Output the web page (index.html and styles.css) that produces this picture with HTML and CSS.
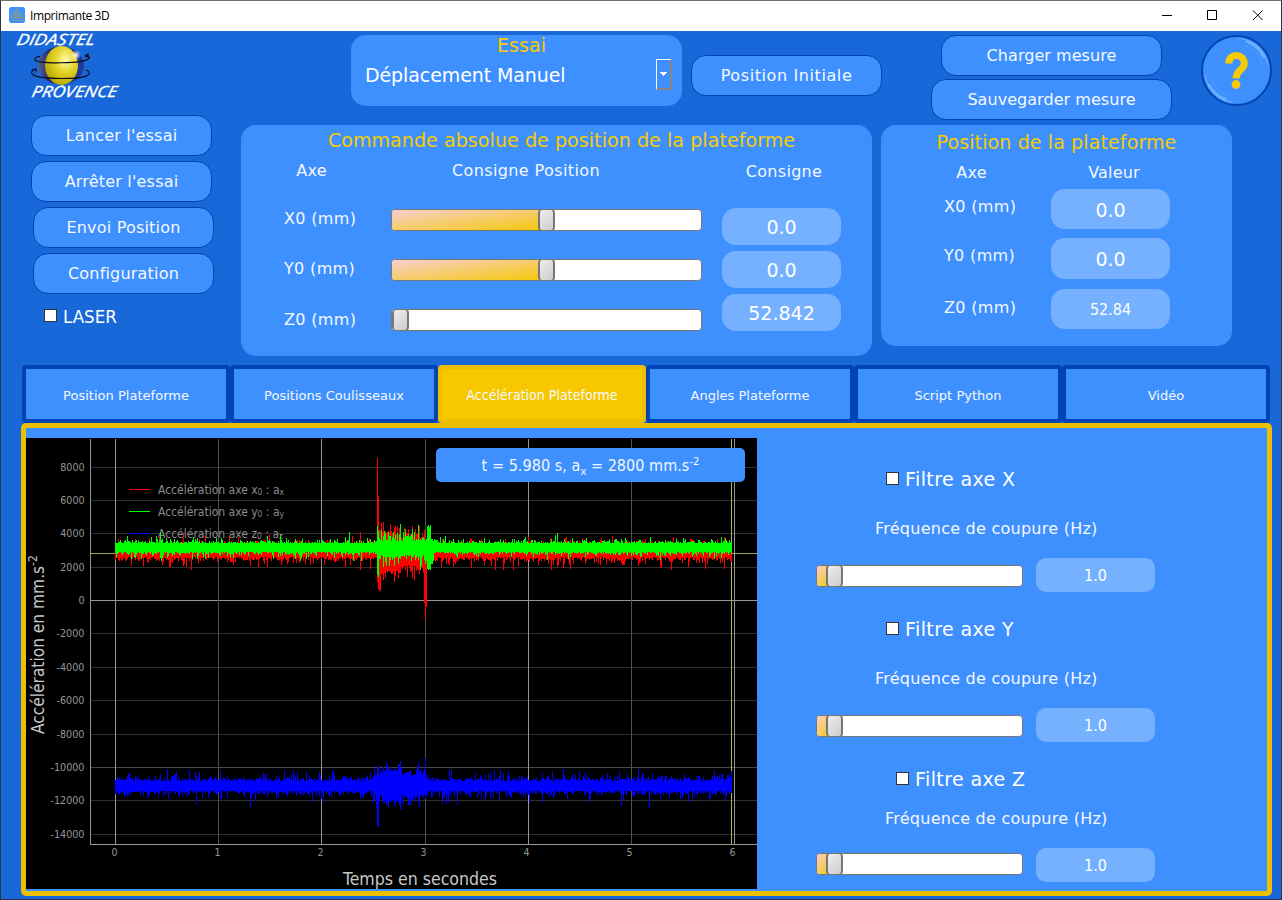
FILE: index.html
```html
<!DOCTYPE html>
<html lang="fr">
<head>
<meta charset="utf-8">
<title>Imprimante 3D</title>
<link rel="stylesheet" href="styles.css">
</head>
<body>
<div class="window">
  <header class="titlebar">
    <svg class="app-icon" width="16" height="16" viewBox="0 0 16 16"><rect width="16" height="16" rx="2.5" fill="#3f90ff"/><path d="M2.500 10.500h11l-1.500-3.500H4zM2.500 13h11M5.500 6.500L8 2.500l2.500 4M5.500 8.800h5" fill="none" stroke="#8f9f78" stroke-width="1.200"/></svg>
    <span class="app-title">Imprimante 3D</span>
    <svg class="win-controls" width="120" height="30" viewBox="0 0 120 30" fill="none" stroke="#000" stroke-width="1"><path d="M10 15.500h10M55.500 10.500h9v9h-9zM101 10.500l9.500 9.500M110.500 10.500l-9.500 9.500"/></svg>
  </header>

  <div class="top">
    <aside class="side">
      <svg class="logo" width="110" height="70" viewBox="14 31 110 70">
        <defs>
          <radialGradient id="ball" cx=".62" cy=".35" r=".7"><stop offset="0" stop-color="#fffbb0"/><stop offset=".45" stop-color="#e4d428"/><stop offset="1" stop-color="#b3a300"/></radialGradient>
          <linearGradient id="shell" x1="0" x2="1"><stop offset="0" stop-color="#54608c"/><stop offset=".3" stop-color="#1c1f70"/><stop offset="1" stop-color="#233a9c"/></linearGradient>
          <radialGradient id="shine"><stop offset="0" stop-color="#fff"/><stop offset="1" stop-color="#fff" stop-opacity="0"/></radialGradient>
        </defs>
        <ellipse cx="61" cy="65.500" rx="23" ry="19" fill="url(#shell)"/>
        <ellipse cx="61.500" cy="65.500" rx="16.500" ry="19.500" fill="url(#ball)"/>
        <circle cx="76" cy="55" r="5" fill="url(#shine)"/>
        <path d="M40 56.500c-4 0-6 2-5 3.500 4 4 48 4 54-1.500 1.500-1.500-1-2.500-4-2M85 56l3-2v4M34 70c-3 1-3 3-1 4.500 6 5.500 50 5 55 .5 2.500-2 1-4-2-5M32 70l4-1-.5 3.500" fill="none" stroke="#0b0b18" stroke-width="1.100"/>
        <text class="logo-text" transform="translate(16 45) skewX(-12)" textLength="78" lengthAdjust="spacingAndGlyphs">DIDASTEL</text>
        <text class="logo-text" transform="translate(31 97) skewX(-12)" textLength="85" lengthAdjust="spacingAndGlyphs">PROVENCE</text>
      </svg>
      <div class="side-buttons">
        <button class="btn">Lancer l'essai</button>
        <button class="btn">Arrêter l'essai</button>
        <button class="btn shifted">Envoi Position</button>
        <button class="btn shifted">Configuration</button>
      </div>
      <label class="check laser"><span class="box"></span>LASER</label>
    </aside>

    <div class="top-right">
      <div class="toolbar">
        <section class="card essai">
          <h2>Essai</h2>
          <div class="combo"><span>Déplacement Manuel</span><i class="combo-arrow"></i></div>
        </section>
        <button class="btn initial">Position Initiale</button>
        <div class="measure">
          <button class="btn load">Charger mesure</button>
          <button class="btn save">Sauvegarder mesure</button>
        </div>
        <svg class="help" width="71" height="71" viewBox="0 0 71 71">
          <circle cx="35.500" cy="35.500" r="34.500" fill="#3f90ff" stroke="#0043b3" stroke-width="2"/>
          <g fill="none" stroke="#78b6ff" stroke-linecap="round">
            <path d="M38 3.500a32 32 0 0 1 29 27M4 40a32 32 0 0 0 27 27" stroke-width="1.200" opacity=".7"/>
            <path d="M46 6.500a31 31 0 0 1 17 16M8 50a31 31 0 0 0 16 14" stroke-width="2.500" opacity=".8"/>
            <path d="M43 10a26 26 0 0 1 18 18M10 43a26 26 0 0 0 18 18" stroke-width="1" opacity=".3"/>
          </g>
          <path d="M27.800 28.500C28 17 43.500 18.500 43.300 28.500c-.1 7-8.300 6-8.300 15" fill="none" stroke="#f7cb00" stroke-width="7"/>
          <circle cx="35" cy="49.500" r="4.400" fill="#f7cb00"/>
        </svg>
      </div>

      <div class="cards">
        <section class="card command">
          <h2>Commande absolue de position de la plateforme</h2>
          <div class="command-cols">
            <div class="col axes"><h3>Axe</h3><span>X0 (mm)</span><span>Y0 (mm)</span><span>Z0 (mm)</span></div>
            <div class="col sliders"><h3>Consigne Position</h3>
              <div class="slider"><i class="fill half"></i><i class="knob"></i></div>
              <div class="slider"><i class="fill half"></i><i class="knob"></i></div>
              <div class="slider"><i class="fill zero"></i><i class="knob"></i></div>
            </div>
            <div class="col values"><h3>Consigne</h3><output>0.0</output><output>0.0</output><output>52.842</output></div>
          </div>
        </section>
        <section class="card position">
          <h2>Position de la plateforme</h2>
          <div class="position-cols">
            <div class="col axes"><h3>Axe</h3><span>X0 (mm)</span><span>Y0 (mm)</span><span>Z0 (mm)</span></div>
            <div class="col values"><h3>Valeur</h3><output>0.0</output><output class="tall">0.0</output><output class="narrow">52.84</output></div>
          </div>
        </section>
      </div>
    </div>
  </div>

  <nav class="tabs">
    <a class="tab">Position Plateforme</a>
    <a class="tab">Positions Coulisseaux</a>
    <a class="tab active">Accélération Plateforme</a>
    <a class="tab">Angles Plateforme</a>
    <a class="tab">Script Python</a>
    <a class="tab">Vidéo</a>
  </nav>

  <main class="pane">
    <div class="plot">
      <svg id="chart" width="731" height="451" viewBox="26 438 731 451">
        <g id="grid" fill="none"></g>
        <g class="legend">
          <path d="M129 489.500h21" stroke="#f00"/><path d="M129 511.500h21" stroke="#0f0"/><path d="M129 533.500h21" stroke="#00f"/>
          <text x="158" y="494" textLength="126" lengthAdjust="spacingAndGlyphs">Accélération axe x<tspan class="sub" dy="1">0</tspan><tspan dy="-1"> : a</tspan><tspan class="sub" dy="1">x</tspan></text>
          <text x="158" y="516" textLength="126" lengthAdjust="spacingAndGlyphs">Accélération axe y<tspan class="sub" dy="1">0</tspan><tspan dy="-1"> : a</tspan><tspan class="sub" dy="1">y</tspan></text>
          <text x="158" y="538" textLength="125" lengthAdjust="spacingAndGlyphs">Accélération axe z<tspan class="sub" dy="1">0</tspan><tspan dy="-1"> : a</tspan><tspan class="sub" dy="1">z</tspan></text>
        </g>
        <g id="traces"></g>
        <g id="ticks"></g>
        <text class="axis-title" x="343" y="885" textLength="154" lengthAdjust="spacingAndGlyphs">Temps en secondes</text>
        <text class="axis-title" transform="translate(44 734) rotate(-90)" textLength="179" lengthAdjust="spacingAndGlyphs">Accélération en mm.s<tspan class="sup" dy="-7">-2</tspan></text>
      </svg>
      <div class="readout"><span>t = 5.980 s, a<sub>x</sub> = 2800 mm.s<sup>-2</sup></span></div>
    </div>

    <div class="filters">
      <section class="filter">
        <label class="check"><span class="box"></span>Filtre axe X</label>
        <p>Fréquence de coupure (Hz)</p>
        <div class="filter-row"><div class="slider"><i class="fill small"></i><i class="knob"></i></div><output>1.0</output></div>
      </section>
      <section class="filter">
        <label class="check"><span class="box"></span>Filtre axe Y</label>
        <p>Fréquence de coupure (Hz)</p>
        <div class="filter-row"><div class="slider"><i class="fill small"></i><i class="knob"></i></div><output>1.0</output></div>
      </section>
      <section class="filter last">
        <label class="check"><span class="box"></span>Filtre axe Z</label>
        <p>Fréquence de coupure (Hz)</p>
        <div class="filter-row"><div class="slider"><i class="fill small"></i><i class="knob"></i></div><output>1.0</output></div>
      </section>
    </div>
  </main>
</div>
<script src="script.js"></script>
</body>
</html>
```
FILE: styles.css
```css
* { box-sizing: border-box; }
body { margin: 0; }
h2, h3, p { margin: 0; font-weight: 400; }
i { display: block; }

.window {
  width: 1282px; height: 900px; overflow: hidden;
  display: flex; flex-direction: column;
  background: #1868d9; color: #f4f8ff;
  border: 1px solid #2c3548; border-top-color: #6f6f6f;
  font: 16px/20px "DejaVu Sans", Verdana, sans-serif;
}
.titlebar {
  height: 30px; flex: none; display: flex; align-items: center;
  padding: 0 9px 2px 8px; background: #fff; color: #000;
}
.app-title { margin: 2px 0 0 5px; font: 12px/16px "Open Sans", "Noto Sans", sans-serif; letter-spacing: -.4px; }
.win-controls { margin-left: auto; }

.top { display: flex; height: 334px; flex: none; }
.side { width: 240px; flex: none; }
.logo { display: block; margin-left: 13px; overflow: visible; }
.logo-text { font: italic 500 15.5px "Open Sans", "Noto Sans", sans-serif; fill: #fff; stroke: #fff; stroke-width: .3px; }
.side-buttons { display: flex; flex-direction: column; gap: 5px; padding: 14px 0 0 30px; }
.btn {
  width: 181px; height: 41px; padding: 0; flex: none;
  border: 1px solid #0043b3; border-radius: 15px;
  background: #3f90ff; color: #f4f8ff; font: inherit; letter-spacing: .2px;
}
.shifted { margin-left: 2px; }
.check { display: flex; align-items: center; gap: 6px; font-size: 19px; color: #fff; }
.box { width: 13px; height: 13px; border: 1px solid #333; background: #fff; }
.laser { margin: 13px 0 0 43px; font: 18.5px/20px "DejaVu Sans Condensed", "Noto Sans", sans-serif; letter-spacing: 0; }
.laser .box { margin-top: -3px; }

.toolbar { display: flex; height: 94px; padding: 4px 0 0 110px; }
.card { background: #3f90ff; border-radius: 15px; flex: none; }
.card h2 { color: #f7cb00; font-size: 19px; line-height: 22px; text-align: center; letter-spacing: .08px; }
.essai { width: 331px; height: 71px; }
.essai h2 { padding: 0 0 0 10px; margin-top: -1px; }
.combo { display: flex; justify-content: space-between; padding: 3px 10px 0 14px; font-size: 19px; line-height: 32px; color: #fff; letter-spacing: -.1px; }
.combo-arrow {
  width: 16px; height: 31px; border: 1px solid #fff; border-right: 2px solid #858585; border-bottom: 2px solid #858585;
  background: linear-gradient(#fff, #fff) 3px 12px / 7px 1px no-repeat, linear-gradient(#fff, #fff) 4px 13px / 5px 1px no-repeat, linear-gradient(#fff, #fff) 5px 14px / 3px 1px no-repeat, linear-gradient(#fff, #fff) 6px 15px / 1px 1px no-repeat;
}
.initial { width: 191px; margin: 20px 0 0 9px; letter-spacing: .6px; }
.measure { display: flex; flex-direction: column; align-items: center; gap: 3px; margin-left: 49px; }
.measure .btn { letter-spacing: .05px; }
.measure .load { width: 221px; }
.measure .save { width: 241px; }
.help { margin-left: 29px; flex: none; }

.cards { display: flex; gap: 9px; }
.command { width: 631px; height: 231px; padding-top: 4px; }
.command h2 { padding-left: 10px; }
.col { display: flex; flex-direction: column; }
.col h3 { font-size: 16px; line-height: 20px; text-align: center; white-space: nowrap; letter-spacing: .2px; }
output {
  display: block; width: 119px; height: 37px; border-radius: 14px; background: #75b1ff;
  color: #fff; font-size: 19px; line-height: 39px; text-align: center;
}
.command-cols { display: flex; padding: 10px 0 0 43px; }
.command .axes { width: 107px; }
.command .axes h3 { width: 55px; margin-bottom: 28px; }
.axes span { height: 20px; letter-spacing: .35px; white-space: nowrap; }
.command .axes span + span { margin-top: 30px; }
.command .axes span + span + span { margin-top: 31px; }
.sliders { width: 311px; }
.sliders h3 { padding-right: 41px; margin-bottom: 28px; letter-spacing: .4px; }
.sliders .slider { margin-bottom: 28px; }
.command .values { width: 119px; margin-left: 20px; }
.command .values h3 { padding-left: 5px; margin-bottom: 25px; line-height: 22px; letter-spacing: .3px; }
.command output { margin-bottom: 6px; }

.position { width: 351px; height: 221px; padding-top: 6px; }
.position h2 { letter-spacing: .12px; }
.position-cols { display: flex; padding: 10px 0 0 63px; }
.position .axes { width: 107px; }
.position .axes h3 { width: 55px; margin-bottom: 14px; }
.position .axes span { margin-bottom: 29px; }
.position .axes span + span { margin-bottom: 32px; }
.position .values h3 { padding-left: 7px; margin-bottom: 6px; }
.position output { height: 40px; line-height: 42px; margin-bottom: 9px; }
.position output.tall { height: 41px; line-height: 43px; margin-bottom: 10px; }
.position output.narrow { font: 16px/41px "DejaVu Sans Condensed", "Noto Sans", sans-serif; }

.slider {
  display: flex; height: 22px; flex: none; overflow: hidden;
  border: 1px solid #777; border-radius: 4px; background: #fff;
}
.fill { background: linear-gradient(to bottom right, #f7cfd0, #f5c90a); margin-right: -3px; flex: none; }
.half { width: 149px; }
.zero { width: 3px; }
.small { width: 12px; }
.knob {
  width: 17px; height: 22px; margin-top: -1px; flex: none; position: relative;
  border: 1px solid #777; border-width: 1px 2px; border-radius: 4px;
  background: linear-gradient(135deg, #eee, #ccc);
}

.tabs { display: flex; height: 58px; flex: none; padding-left: 21px; }
.tab {
  width: 208px; height: 58px; flex: none; padding-bottom: 1px;
  border: 4px solid #0043b3; border-radius: 4px; background: #3f90ff;
  font-size: 13px; line-height: 53px; text-align: center; letter-spacing: .02px;
}
.active { border-color: #ecc000; background: #f7c800; font: 14px/52px "DejaVu Sans Condensed", "Noto Sans", sans-serif; }

.pane {
  display: flex; width: 1251px; height: 473px; flex: none; margin-left: 20px;
  border: 5px solid #ecc000; border-radius: 5px; background: #3f90ff;
}
.plot { width: 731px; height: 451px; margin-top: 10px; background: #000; position: relative; flex: none; }
#chart { display: block; font-family: "DejaVu Sans Condensed", "Noto Sans", sans-serif; shape-rendering: crispEdges; }
.legend { font-size: 11.5px; fill: #8c8c8c; }
.legend .sub { font-size: 8px; }
.tick { font-size: 10.5px; fill: #969696; }
.axis-title { font-size: 17px; fill: #c8c8c8; }
.sup { font-size: 12px; }
.readout {
  position: absolute; left: 410px; top: 10px; width: 309px; height: 34px; border-radius: 5px;
  background: #3f90ff; font: 16px/35px "DejaVu Sans Condensed", "Noto Sans", sans-serif;
  text-align: center; letter-spacing: .05px;
}
.readout sub, .readout sup { font-size: 11px; line-height: 0; }

.filters { padding: 41px 0 0 59px; }
.filter { height: 150px; display: flex; flex-direction: column; }
.filter .check { margin-left: 70px; height: 20px; letter-spacing: .4px; }
.filter .box { margin-top: -1px; }
.filter p { margin: 30px 0 19px 59px; white-space: nowrap; letter-spacing: .25px; }
.filter-row { display: flex; align-items: center; gap: 13px; }
.filter-row .slider { width: 207px; margin-top: 2px; }
.filter-row output { height: 34px; border-radius: 10px; font: 16px/35px "DejaVu Sans Condensed", "Noto Sans", sans-serif; }
.last .check { margin-left: 80px; }
.last p { margin: 20px 0 19px 69px; }
.last .slider { margin-top: -2px; }
```
FILE: script.js
```js
const NS = 'http://www.w3.org/2000/svg';

function add(parent, tag, attrs, text) {
  const el = document.createElementNS(NS, tag);
  for (const key in attrs) el.setAttribute(key, attrs[key]);
  if (text !== undefined) el.textContent = text;
  document.getElementById(parent).appendChild(el);
  return el;
}
const line = (d, color) => add('grid', 'path', { d, stroke: color });

// Grid, axes and tick labels
const rows = [467, 500, 533, 567, 600, 633, 667, 700, 734, 767, 800, 834];
rows.forEach((y, i) => {
  const value = 8000 - 2000 * i;
  line(`M91 ${y + .5}H757`, value === 0 ? '#969696' : value === -10000 ? '#484848' : '#303030');
  const width = String(value).replace('-', '').length * 6.05 + (value < 0 ? 3.8 : 0);
  add('ticks', 'text', { class: 'tick', x: 84.500 - width, y: y + 4.4, textLength: width, lengthAdjust: 'spacingAndGlyphs' }, value);
});
for (let t = 0; t <= 6; t++) {
  const x = 115.5 + t * 103 + (t > 2 ? 1 : 0);
  line(`M${x} 439V844`, t % 2 ? '#505050' : '#969696');
  add('ticks', 'text', { class: 'tick', x: 114.500 + t * 103, y: 856, 'text-anchor': 'middle' }, t);
}
line('M90.5 439V844.5H757', '#969696');
line('M91 553.5H757', '#a8a45c');
line('M731.5 439V844', '#b5b05a');

// Acceleration traces: one vertical extent per pixel column
let seed = 20;
const rnd = () => (seed = (seed * 16807) % 2147483647) / 2147483647;
const tail = (scale, max) => Math.min(max, -Math.log(1 - rnd()) * scale);

function trace(color, extent) {
  let d = '';
  for (let x = 115; x < 732; x++) {
    const [top, bottom] = extent(x);
    d += `M${x} ${Math.round(top)}h1V${Math.round(bottom)}h-1z`;
  }
  add('traces', 'path', { d, fill: color });
}
const burst = x => x >= 377 && x <= 424;

trace('#f00', x => {
  if (x === 377) return [458, 582];
  if (x === 378) return [496, 589];
  if (x === 379 || x === 380) return [530, 591];
  if (x === 424) return [530, 603];
  if (x === 425) return [540, 620];
  if (x === 426) return [540, 607];
  if (x < 400 && burst(x)) return [535 - tail(6, 13), 570 + tail(5, 12)];
  if (burst(x)) return [538 - tail(5, 15), 565 + tail(5, 19)];
  return [545 - tail(2, 13), 557 + tail(3, 13)];
});
trace('#0f0', x => {
  if (x === 377) return [526, 575];
  if (x === 378) return [531, 577];
  if (burst(x)) return [541 - tail(5, 17), 555 + tail(4, 16)];
  if (x > 426 && x < 431) return [523 + rnd() * 5, 566 + rnd() * 5];
  if (x > 424 && x < 434) return [536 + rnd() * 5, 557 + rnd() * 8];
  return [543.5 - tail(1.8, 12), 552 + tail(1.6, 11)];
});
trace('#00f', x => {
  if (x === 377 || x === 378) return [766, 826];
  if (x === 425) return [758, 799];
  if (x > 381 && x < 402) return [772 - tail(4, 11), 800 + tail(4, 10)];
  if (x > 372 && x < 427) return [776 - tail(3.5, 15), 795 + tail(4, 13)];
  return [781 - tail(2.6, 12), 790.5 + tail(3, 17)];
});
```
